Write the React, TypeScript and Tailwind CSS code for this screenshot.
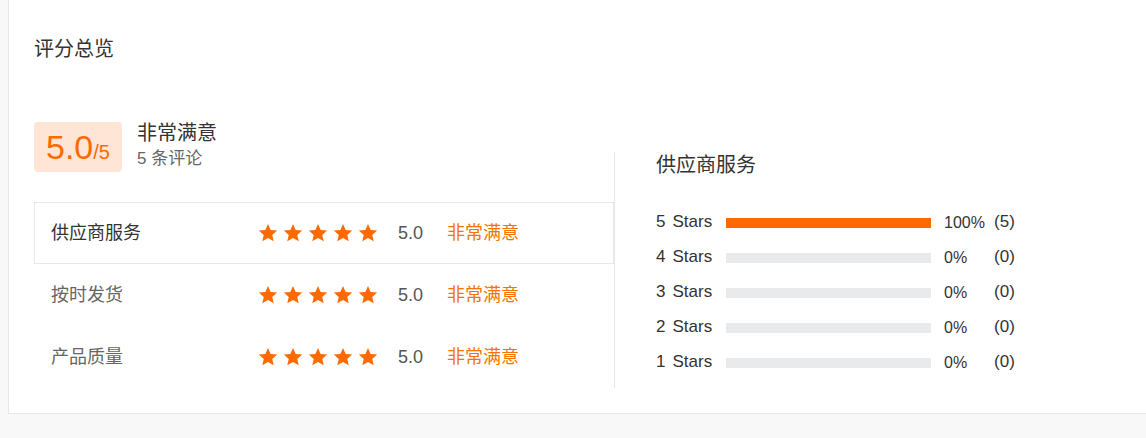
import React from "react";

const font = { fontFamily: '"Liberation Sans", "Noto Sans CJK SC", sans-serif' };

function Star() {
  return (
    <svg width="20" height="20" viewBox="0 0 24 24" className="block">
      <path
        d="M12 1.2l3.2 7.2 7.8.7-5.9 5.2 1.8 7.7L12 18l-6.9 4 1.8-7.7L1 9.1l7.8-.7z"
        fill="#ff6a00"
      />
    </svg>
  );
}

function Stars() {
  return (
    <div className="flex items-center gap-[5px]">
      <Star />
      <Star />
      <Star />
      <Star />
      <Star />
    </div>
  );
}

const rows = [
  { label: "供应商服务", active: true },
  { label: "按时发货", active: false },
  { label: "产品质量", active: false },
];

const dist = [
  { n: 5, pct: 100, count: 5 },
  { n: 4, pct: 0, count: 0 },
  { n: 3, pct: 0, count: 0 },
  { n: 2, pct: 0, count: 0 },
  { n: 1, pct: 0, count: 0 },
];

export default function App() {
  return (
    <div className="w-[1146px] h-[438px] bg-[#f8f8f8] pl-2 overflow-hidden" style={font}>
      <div className="h-[414px] w-[1200px] bg-white border-l border-b border-[#e8e8e8] pl-[25px] pt-[36px]">
        <div className="text-[20px] leading-[26px] text-[#333]">评分总览</div>

        <div className="mt-[60px] flex items-end">
          {/* left column */}
          <div className="w-[580px]">
            <div className="flex items-start">
              <div className="h-[50px] w-[88px] rounded-[4px] bg-[#fee5d6] flex items-baseline justify-center pt-[4px]">
                <span className="text-[34px] leading-[42px] text-[#ff6a00]">5.0</span>
                <span className="text-[20px] leading-[20px] text-[#ff6a00]">/5</span>
              </div>
              <div className="ml-[15px] -mt-[1px]">
                <div className="text-[20px] leading-[24px] text-[#333]">非常满意</div>
                <div className="text-[17px] leading-[28px] text-[#666]">5 条评论</div>
              </div>
            </div>

            <div className="mt-[29px]">
              {rows.map((r) => (
                <div
                  key={r.label}
                  className={
                    r.active
                      ? "h-[62px] flex items-center border border-[#e8e8e8] pl-[16px]"
                      : "h-[62px] flex items-center border border-transparent pl-[16px]"
                  }
                >
                  <div
                    className={
                      r.active
                        ? "w-[207px] text-[18px] leading-[24px] text-[#333]"
                        : "w-[207px] text-[18px] leading-[24px] text-[#666]"
                    }
                  >
                    {r.label}
                  </div>
                  <Stars />
                  <div className="ml-[20px] w-[49px] text-[18px] leading-[24px] text-[#555]">5.0</div>
                  <div className="text-[18px] leading-[24px] text-[#f57300]">非常满意</div>
                </div>
              ))}
            </div>
          </div>

          {/* right column */}
          <div className="h-[236px] border-l border-[#e8e8e8] pl-[41px]">
            <div className="text-[20px] leading-[26px] text-[#333]">供应商服务</div>
            <div className="mt-[27px]">
              {dist.map((d) => (
                <div key={d.n} className="h-[35px] flex items-center text-[#333]">
                  <div className="w-[70px] -mt-[2px] text-[17px] leading-[22px]">
                    {d.n}
                    <span className="ml-[7px]">Stars</span>
                  </div>
                  <div className="w-[205px] h-[10px] bg-[#e9eaec]">
                    <div className="h-full bg-[#ff6a00]" style={{ width: `${d.pct}%` }} />
                  </div>
                  <div className="ml-[13px] w-[50px] text-[16px] leading-[22px] mt-[1px]">{d.pct}%</div>
                  <div className="-mt-[1px] text-[17px] leading-[22px]">({d.count})</div>
                </div>
              ))}
            </div>
          </div>
        </div>
      </div>
    </div>
  );
}
